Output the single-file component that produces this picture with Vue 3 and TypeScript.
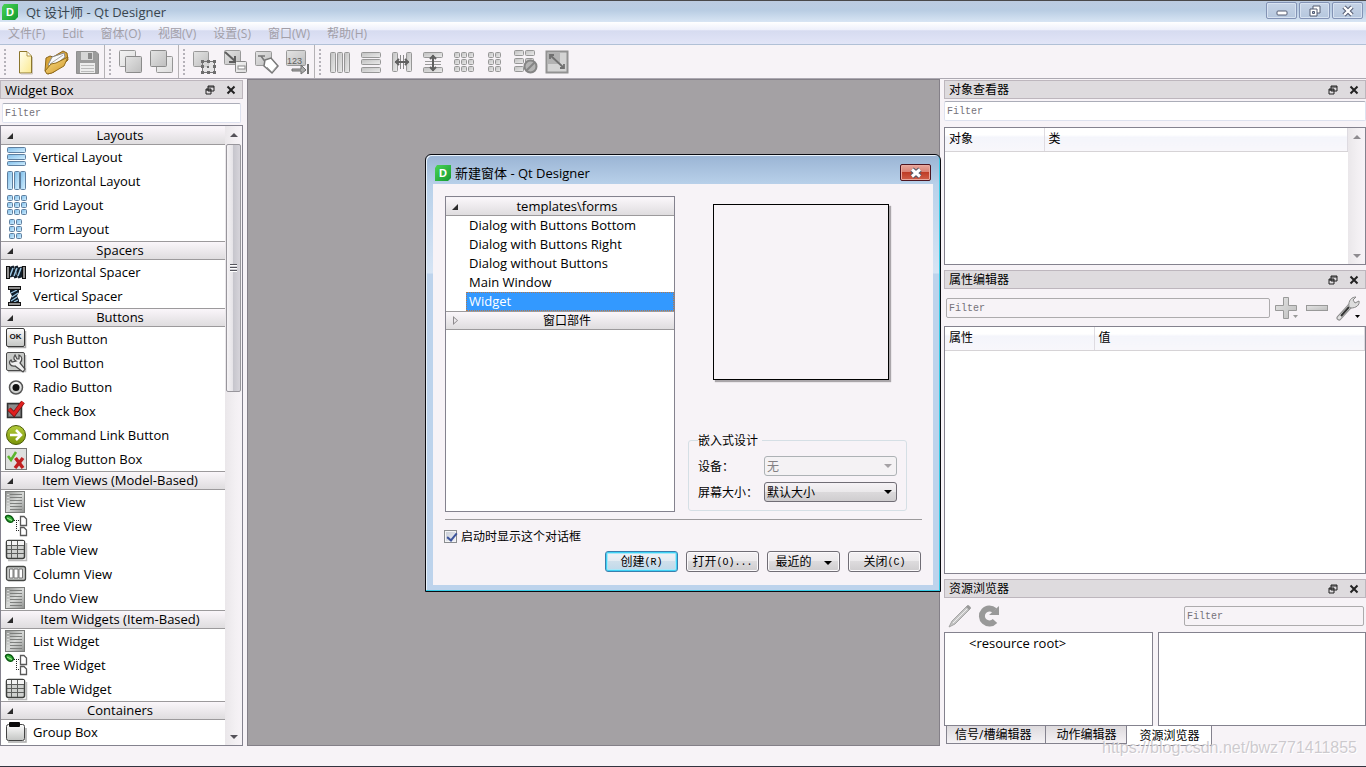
<script setup lang="ts">
import { ref } from 'vue'

interface Section {
  title: string
  items: { label: string; icon: string }[]
}

const bars = (fill: string, stroke: string, rects: number[][]): string =>
  rects
    .map(([x, y, w, h]) => `<rect x="${x + 0.5}" y="${y + 0.5}" width="${w - 1}" height="${h - 1}" rx="1" fill="${fill}" stroke="${stroke}"/>`)
    .join('')

const grid = (x0: number, y0: number, cols: number, pitch: number, size: number): number[][] => {
  const cells: number[][] = []
  for (let r = 0; r < 3; r++) for (let c = 0; c < cols; c++) cells.push([x0 + c * pitch, y0 + r * pitch, size, size])
  return cells
}

const blue = (rects: number[][]): string => bars('url(#gBlue)', '#5f7f9f', rects)
const gray = (rects: number[][]): string => bars('url(#gGray)', '#979797', rects)

const listIcon =
  '<rect x="1.5" y="1.5" width="19" height="21" fill="url(#gList)" stroke="#7b7d7b"/>' +
  '<path d="M6 4.5H18M6 7.5H18M6 10.5H18M6 13.5H18M6 16.5H18M6 19.5H18" stroke="#7d7f7d"/><path d="M3 4.5H5M3 7.5H5M3 10.5H5M3 13.5H5M3 16.5H5M3 19.5H5" stroke="#d8dad8"/>'
const treeIcon =
  '<path d="M1.5 3.5C2 0.500 7 0.500 9.500 5.500C9 9.500 4 9.500 1.500 3.500Z" fill="#34b23a" stroke="#0c5a12" stroke-width="1.500"/><path d="M3 4L8 6.500" stroke="#b5f0a0"/>' +
  '<path d="M10 6.500H15M12.500 8V17M12 16.500H16" stroke="#222" stroke-dasharray="1 1" fill="none"/>' +
  '<path d="M16.500 2.500H20L22.500 5V11.500H16.500ZM16.500 13.500H20L22.500 16V21.500H16.500Z" fill="#fff" stroke="#5a5a5a" stroke-width="1.300"/>'
const tableIcon =
  '<path d="M4 22.500H22.500V5" stroke="#bbb" stroke-width="1.500"/><rect x="2.500" y="2.500" width="18" height="18" rx="2" fill="#cfd1cf" stroke="#3e403e" stroke-width="1.500"/><rect x="3" y="3" width="17" height="4" fill="#f4f4f4"/>' +
  '<path d="M3 7.500H20M3 11.500H20M3 15.500H20M7.500 3V20M13.500 3V20" stroke="#5d5f5d"/>'

const icons: Record<string, string> = {
  vbox: blue([[3, 2, 19, 6], [3, 9, 19, 6], [3, 16, 19, 5]]),
  hbox: blue([[3, 2, 6, 19], [10, 2, 6, 19], [16, 2, 6, 19]]),
  grid: blue(grid(3, 2, 3, 7, 6)),
  form: blue(grid(5, 2, 2, 7, 6)),
  hspacer:
    '<path d="M5 7L8 17M8 6L12 18M12 6L16 18M16 7L19 17" stroke="#101c28" stroke-width="3.500"/><path d="M6 16L9 8M10 16L13 8M14 16L17 8" stroke="#9cc8e4" stroke-width="1.500"/>' +
    '<rect x="2.500" y="6.500" width="3" height="12" fill="#909090" stroke="#111"/><rect x="18.500" y="6.500" width="3" height="12" fill="#909090" stroke="#111"/>',
  vspacer:
    '<path d="M6 5H15V8L13 12L15 16V19H6V16L8 12L6 8Z" fill="#101c28"/><path d="M7 9L13 6M8 13L14 9M7 17L13 13M10 18L14 16" stroke="#9cc8e4" stroke-width="1.200"/>' +
    '<rect x="4.500" y="2.500" width="12" height="3" fill="#909090" stroke="#111"/><rect x="4.500" y="18.500" width="12" height="3" fill="#909090" stroke="#111"/>',
  push:
    '<path d="M4 20.500H21.500V4" stroke="#aaa" stroke-width="1.500" fill="none"/><rect x="2.500" y="1.500" width="18" height="18" rx="1.500" fill="url(#gSteel)" stroke="#3a3a3a"/><text x="11.500" y="12" font-family="Liberation Sans, sans-serif" font-size="8" font-weight="bold" text-anchor="middle" fill="#111">OK</text>',
  tool:
    '<path d="M4 20.500H21.500V4" stroke="#bbb" stroke-width="1.500"/><rect x="2.500" y="1.500" width="18" height="18" rx="1.500" fill="#c9cbc9" stroke="#4a4a4a"/><path d="M11 4C9 7 10 9 12 10L8 11L7 9C4 11 6 16 11 15L19 21L21 18L16 12C19 9 18 5 15 4L15 8L13 8Z" fill="#f0f0f0" stroke="#4a4a4a" stroke-width="1.200"/>',
  radio: '<circle cx="12" cy="12.500" r="6.500" fill="url(#gSteel)" stroke="#555" stroke-width="1.500"/><circle cx="12" cy="12.500" r="3.500" fill="#111"/>',
  check: '<rect x="3.500" y="4.500" width="14" height="14" fill="#777" stroke="#333" stroke-width="1.500"/><rect x="5" y="6" width="11" height="11" fill="#8d8d8d"/><path d="M5 10L10 15L19 3" stroke="#7a1010" stroke-width="4.500" fill="none"/><path d="M5 10L10 15L19 3" stroke="#e02020" stroke-width="3" fill="none"/>',
  command: '<circle cx="12" cy="12" r="9.500" fill="url(#gGreen)" stroke="#4c5c08"/><path d="M6 12H17M12 7L17 12L12 17" stroke="#fff" stroke-width="2.500" fill="none"/>',
  dialog: '<rect x="1.500" y="1.500" width="21" height="21" fill="#dedfde" stroke="#777"/><path d="M4 9L7 13L12 5" stroke="#5bb52c" stroke-width="2.500" fill="none"/><path d="M11.500 11L19 21M19 11L11 21" stroke="#c02020" stroke-width="3.500"/>',
  list: listIcon,
  tree: treeIcon,
  table: tableIcon,
  column: '<rect x="2.500" y="4.500" width="19" height="14" rx="2" fill="#c6c8c6" stroke="#454745" stroke-width="1.300"/><path d="M5.500 7H9V16H5.500ZM10 7H14V16H10ZM15 7H18.500V16H15Z" fill="#fff" stroke="#777"/>',
  group: '<path d="M4 22H22V8" stroke="#aaa" stroke-width="1.500" fill="none"/><rect x="2.500" y="4.500" width="18" height="16" rx="2" fill="url(#gSteel)" stroke="#444"/><rect x="5" y="2" width="11" height="5" rx="1" fill="#0a0a0a"/>',

  new: '<path d="M7.500 2.500H15L19.500 7V24H7.500Z" fill="url(#gPage)" stroke="#8c762c"/><path d="M15 3V7H19" fill="#fff" stroke="#b49a48"/><path d="M20.500 8V25H9" stroke="#ccc5bb" fill="none"/>',
  open:
    '<path d="M2 22L3 9L7 7L10 8L20 2L24 4L25 11L11 23L5 25Z" fill="#d9a63a" stroke="#8b651c"/><path d="M5 16L9 8L21 4L22 8L10 18Z" fill="#fafafa" stroke="#8a8a8a"/><path d="M7 15L20 6" stroke="#aaa"/><path d="M2 22L8 15L13 14L25 8L21 17L9 24L4 25Z" fill="url(#gGold)" stroke="#916b1b"/>',
  save: '<path d="M2.500 2.500H22L24.500 5V24.500H2.500Z" fill="#9c9c9c" stroke="#8f8f8f"/><rect x="7" y="3" width="12" height="8" fill="#d6d6d6"/><rect x="14" y="4" width="4" height="6" fill="#8a8a8a"/><rect x="6" y="14" width="15" height="10" fill="#ececec"/><path d="M7 16.500H20M7 19.500H20M7 22.500H20" stroke="#bbb"/>',
  back: bars('url(#gLite)', '#969696', [[2, 1, 17, 17]]) + bars('url(#gFlat)', '#8b8b8b', [[8, 7, 17, 17]]),
  front: bars('url(#gLite)', '#969696', [[8, 7, 17, 17]]) + bars('url(#gFlat)', '#8b8b8b', [[2, 1, 17, 17]]),
  widgets:
    bars('url(#gFlat)', '#999', [[2, 2, 16, 16]]) + '<rect x="11.500" y="12.500" width="12" height="11" fill="#ddd" fill-opacity=".7" stroke="#777"/><path d="M10 11h3v3h-3zM16 11h3v3h-3zM22 11h3v3h-3zM10 16h3v3h-3zM22 16h3v3h-3zM10 22h3v3h-3zM16 22h3v3h-3zM22 22h3v3h-3zM16 17h2v2h-2z" fill="#6e6e6e"/>',
  signals:
    bars('url(#gFlat)', '#999', [[2, 1, 17, 15]]) + bars('url(#gLite)', '#888', [[13, 12, 12, 12]]) + '<rect x="16" y="17" width="7" height="3" fill="#fff" stroke="#888"/><path d="M3 3L13 12M13 7V13H7" stroke="#5e5e5e" stroke-width="2" fill="none"/>',
  buddies:
    bars('url(#gFlat)', '#999', [[2, 2, 17, 15]]) + '<path d="M5 7H12M8 7L13 14" stroke="#777" stroke-width="1.500"/><path d="M12 11L18 9L25 17L19 24L11 17Z" fill="#fff" stroke="#777" stroke-width="1.500"/><path d="M14 18L19 23L24 17" stroke="#aaa" fill="none"/>',
  order:
    bars('url(#gFlat)', '#999', [[2, 1, 20, 16]]) + '<text x="3" y="15" font-family="Liberation Sans, sans-serif" font-size="9" fill="#5f5f5f">123</text><path d="M8 20H17V16L22 21L17 25V22H8Z" fill="#aaa" stroke="#6f6f6f"/><path d="M24 15V25" stroke="#6f6f6f" stroke-width="2"/>',
  thbox: gray([[3, 3, 6, 21], [10, 3, 6, 21], [17, 3, 6, 21]]),
  tvbox: gray([[3, 3, 20, 6], [3, 10, 20, 6], [3, 18, 20, 6]]),
  hsplit: gray([[3, 3, 6, 20], [17, 3, 6, 20]]) + '<path d="M11.500 6V20M14.500 6V20" stroke="#888"/><path d="M6 13H20M10 10L7 13L10 16M16 10L19 13L16 16" stroke="#606060" stroke-width="2" fill="none"/>',
  vsplit: gray([[3, 3, 20, 6], [3, 18, 20, 6]]) + '<path d="M5 12.500H21M5 15.500H21" stroke="#999"/><path d="M13 6V22M10 10L13 7L16 10M10 18L13 21L16 18" stroke="#606060" stroke-width="2" fill="none"/>',
  tgrid: gray(grid(3, 3, 3, 7, 6)),
  tform: gray(grid(6, 3, 2, 7, 6)),
  break: gray([[1, 1, 10, 6], [12, 1, 10, 6], [1, 9, 10, 6], [12, 9, 9, 6], [1, 17, 10, 6]]) + '<circle cx="17.500" cy="17.500" r="6" fill="#b4b4b4" stroke="#858585" stroke-width="2"/><path d="M13.500 21.500L21.500 13.500" stroke="#858585" stroke-width="2"/>',
  adjust: '<rect x="2.500" y="2.500" width="21" height="21" fill="#d4d4d4" stroke="#929292" stroke-width="2"/><path d="M4 4H16V15H4Z" fill="#b2b2b2"/><path d="M6 6L20 19M6 10V6H10M20 15V19H16" stroke="#707070" stroke-width="1.800" fill="none"/>',
}

const sections: Section[] = [
  { title: 'Layouts', items: [
    { label: 'Vertical Layout', icon: 'vbox' },
    { label: 'Horizontal Layout', icon: 'hbox' },
    { label: 'Grid Layout', icon: 'grid' },
    { label: 'Form Layout', icon: 'form' },
  ] },
  { title: 'Spacers', items: [
    { label: 'Horizontal Spacer', icon: 'hspacer' },
    { label: 'Vertical Spacer', icon: 'vspacer' },
  ] },
  { title: 'Buttons', items: [
    { label: 'Push Button', icon: 'push' },
    { label: 'Tool Button', icon: 'tool' },
    { label: 'Radio Button', icon: 'radio' },
    { label: 'Check Box', icon: 'check' },
    { label: 'Command Link Button', icon: 'command' },
    { label: 'Dialog Button Box', icon: 'dialog' },
  ] },
  { title: 'Item Views (Model-Based)', items: [
    { label: 'List View', icon: 'list' },
    { label: 'Tree View', icon: 'tree' },
    { label: 'Table View', icon: 'table' },
    { label: 'Column View', icon: 'column' },
    { label: 'Undo View', icon: 'list' },
  ] },
  { title: 'Item Widgets (Item-Based)', items: [
    { label: 'List Widget', icon: 'list' },
    { label: 'Tree Widget', icon: 'tree' },
    { label: 'Table Widget', icon: 'table' },
  ] },
  { title: 'Containers', items: [{ label: 'Group Box', icon: 'group' }] },
]

const menus = ['文件(F)', 'Edit', '窗体(O)', '视图(V)', '设置(S)', '窗口(W)', '帮助(H)']
const toolGroups = [
  ['new', 'open', 'save'],
  ['back', 'front'],
  ['widgets', 'signals', 'buddies', 'order'],
  ['thbox', 'tvbox', 'hsplit', 'vsplit', 'tgrid', 'tform', 'break', 'adjust'],
]
const templates = ['Dialog with Buttons Bottom', 'Dialog with Buttons Right', 'Dialog without Buttons', 'Main Window', 'Widget']
const tabs = ['信号/槽编辑器', '动作编辑器', '资源浏览器']

const selected = ref('Widget')
const activeTab = ref('资源浏览器')
const showOnStart = ref(true)
const device = ref('无')
const screenSize = ref('默认大小')
</script>

<template>
  <div class="window">
    <svg class="defs" width="0" height="0" aria-hidden="true">
      <defs>
        <linearGradient id="gBlue" x1="0" y1="0" x2="1" y2="1"><stop offset="0" stop-color="#7dbdea" /><stop offset="1" stop-color="#d8f1ff" /></linearGradient>
        <linearGradient id="gGray" x1="0" y1="0" x2="1" y2="1"><stop offset="0" stop-color="#c0c0c0" /><stop offset="1" stop-color="#ececec" /></linearGradient>
        <linearGradient id="gFlat" x1="0" y1="0" x2="1" y2="1"><stop offset="0" stop-color="#e4e4e4" /><stop offset="1" stop-color="#bebebe" /></linearGradient>
        <linearGradient id="gLite" x1="0" y1="0" x2="1" y2="1"><stop offset="0" stop-color="#f4f4f4" /><stop offset="1" stop-color="#dcdcdc" /></linearGradient>
        <linearGradient id="gSteel" x1="0" y1="0" x2="0" y2="1"><stop offset="0" stop-color="#fdfdfd" /><stop offset="1" stop-color="#c3c5c3" /></linearGradient>
        <linearGradient id="gList" x1="0" y1="0" x2="1" y2="1"><stop offset="0" stop-color="#8e908e" /><stop offset=".5" stop-color="#d8dad8" /><stop offset="1" stop-color="#8e908e" /></linearGradient>
        <linearGradient id="gGreen" x1="0" y1="0" x2="0" y2="1"><stop offset="0" stop-color="#b4cc3c" /><stop offset="1" stop-color="#7a9408" /></linearGradient>
        <linearGradient id="gPage" x1="0" y1="0" x2="1" y2="1"><stop offset="0" stop-color="#fffef0" /><stop offset="1" stop-color="#fbe98e" /></linearGradient>
        <linearGradient id="gGold" x1="0" y1="0" x2="1" y2="1"><stop offset="0" stop-color="#fbdf8a" /><stop offset="1" stop-color="#cf9626" /></linearGradient>
        <linearGradient id="gLogo" x1="0" y1="0" x2="1" y2="1"><stop offset="0" stop-color="#4bd455" /><stop offset="1" stop-color="#139a30" /></linearGradient>
      </defs>
    </svg>

    <header class="titlebar">
      <svg class="logo" viewBox="0 0 16 16"><path d="M2 0H16V13L13 16H0V3Z" fill="url(#gLogo)" /><text x="8" y="12" font-family="Liberation Sans, sans-serif" font-size="11" font-weight="bold" text-anchor="middle" fill="#fff">D</text></svg>
      <h1>Qt 设计师 - Qt Designer</h1>
      <div class="winbtns">
        <button type="button" aria-label="Minimize"><svg viewBox="0 0 16 14"><rect x="3" y="7" width="10" height="4" rx="1" fill="#fff" stroke="#545c72" /></svg></button>
        <button type="button" aria-label="Restore"><svg viewBox="0 0 16 14"><path d="M6 2H13V9H6Z" fill="#fff" stroke="#545c72" /><path d="M3 5H10V12H3Z" fill="#fff" stroke="#545c72" /><path d="M5.500 7.500H7.500V9.500H5.500Z" fill="#a8bad6" stroke="#545c72" /></svg></button>
        <button type="button" aria-label="Close"><svg viewBox="0 0 16 14"><path d="M4 3L12 11M12 3L4 11" stroke="#545c72" stroke-width="4.500" /><path d="M4 3L12 11M12 3L4 11" stroke="#fff" stroke-width="2.400" /></svg></button>
      </div>
    </header>

    <nav class="menubar">
      <button v-for="m in menus" :key="m" type="button">{{ m }}</button>
    </nav>

    <div class="toolbars">
      <div v-for="(group, gi) in toolGroups" :key="gi" class="toolgroup" role="toolbar">
        <span class="grip"></span>
        <button v-for="name in group" :key="name" type="button" :aria-label="name">
          <svg viewBox="0 0 26 26" fill="none" v-html="icons[name]"></svg>
        </button>
      </div>
    </div>

    <div class="workspace">
      <aside class="dock left">
        <div class="docktitle">
          <h2>Widget Box</h2>
          <button type="button" aria-label="Float"><svg viewBox="0 0 10 10"><path d="M3 1H9V6H3ZM3 2H9M1 4H6V9H1ZM1 5H6" fill="none" stroke="#222" /></svg></button>
          <button type="button" aria-label="Close"><svg viewBox="0 0 10 10"><path d="M1.500 1.500L8.500 8.500M8.500 1.500L1.500 8.500" stroke="#222" stroke-width="2" /></svg></button>
        </div>
        <input class="filter wide" type="text" placeholder="Filter" aria-label="Filter widgets" />
        <div class="widgetbox">
          <div class="sections">
            <section v-for="s in sections" :key="s.title">
              <button type="button" class="sechead"><i class="tri"></i>{{ s.title }}</button>
              <ul>
                <li v-for="item in s.items" :key="item.label" class="witem">
                  <svg viewBox="0 0 24 24" fill="none" v-html="icons[item.icon]"></svg>{{ item.label }}
                </li>
              </ul>
            </section>
          </div>
          <div class="scroll">
            <i class="up"></i>
            <div class="thumb"><span></span></div>
            <i class="down"></i>
          </div>
        </div>
      </aside>

      <main class="mdi"></main>

      <aside class="dock right">
        <section class="inspector">
          <div class="docktitle">
            <h2>对象查看器</h2>
            <button type="button" aria-label="Float"><svg viewBox="0 0 10 10"><path d="M3 1H9V6H3ZM3 2H9M1 4H6V9H1ZM1 5H6" fill="none" stroke="#222" /></svg></button>
            <button type="button" aria-label="Close"><svg viewBox="0 0 10 10"><path d="M1.500 1.500L8.500 8.500M8.500 1.500L1.500 8.500" stroke="#222" stroke-width="2" /></svg></button>
          </div>
          <input class="filter wide" type="text" placeholder="Filter" aria-label="Filter objects" />
          <div class="view">
            <table class="objects">
              <thead><tr><th>对象</th><th>类</th></tr></thead>
            </table>
            <div class="scroll"><i class="up"></i><i class="down"></i></div>
          </div>
        </section>

        <section class="properties">
          <div class="docktitle">
            <h2>属性编辑器</h2>
            <button type="button" aria-label="Float"><svg viewBox="0 0 10 10"><path d="M3 1H9V6H3ZM3 2H9M1 4H6V9H1ZM1 5H6" fill="none" stroke="#222" /></svg></button>
            <button type="button" aria-label="Close"><svg viewBox="0 0 10 10"><path d="M1.500 1.500L8.500 8.500M8.500 1.500L1.500 8.500" stroke="#222" stroke-width="2" /></svg></button>
          </div>
          <div class="proptools">
            <input class="filter off" type="text" placeholder="Filter" aria-label="Filter properties" disabled />
            <button type="button" aria-label="Add"><svg viewBox="0 0 26 26"><path d="M9.500 2.500H14.500V10.500H22.500V15.500H14.500V23.500H9.500V15.500H1.500V10.500H9.500Z" fill="url(#gFlat)" stroke="#999" /><path d="M19 20H24L21.500 23Z" fill="#999" /></svg></button>
            <button type="button" aria-label="Remove"><svg viewBox="0 0 26 26"><rect x="1.500" y="10.500" width="21" height="5" fill="url(#gFlat)" stroke="#999" /></svg></button>
            <button type="button" aria-label="Configure"><svg viewBox="0 0 26 26"><path d="M3 23L14 11" stroke="#8a8a8a" stroke-width="5" stroke-linecap="round" /><path d="M3 23L14 11" stroke="#e0e0e0" stroke-width="3" stroke-linecap="round" /><path d="M5 21L13 12" stroke="#333" stroke-width="2" /><path d="M13 12C12 5 16 2 20 2L17 5L19 8L23 6C24 10 20 13 15 13Z" fill="#ddd" stroke="#888" /><path d="M19 20H24L21.500 23Z" fill="#000" /></svg></button>
          </div>
          <div class="view">
            <table class="props">
              <thead><tr><th>属性</th><th>值</th></tr></thead>
            </table>
          </div>
        </section>

        <section class="resources">
          <div class="docktitle">
            <h2>资源浏览器</h2>
            <button type="button" aria-label="Float"><svg viewBox="0 0 10 10"><path d="M3 1H9V6H3ZM3 2H9M1 4H6V9H1ZM1 5H6" fill="none" stroke="#222" /></svg></button>
            <button type="button" aria-label="Close"><svg viewBox="0 0 10 10"><path d="M1.500 1.500L8.500 8.500M8.500 1.500L1.500 8.500" stroke="#222" stroke-width="2" /></svg></button>
          </div>
          <div class="restools">
            <button type="button" aria-label="Edit resources"><svg viewBox="0 0 24 24"><path d="M1 23L4 17L19 2C21 1 23 3 22 5L7 20Z" fill="#c4c4c4" stroke="#a4a4a4" /><path d="M5 19L20 4" stroke="#eee" /><path d="M18 3L21 6L23 4L20 1Z" fill="#999" /></svg></button>
            <button type="button" aria-label="Reload"><svg viewBox="0 0 24 24"><path d="M17.500 6.500A7.500 7.500 0 1 0 18 17" fill="none" stroke="#999" stroke-width="6" /><path d="M12 11H22V2Z" fill="#999" /></svg></button>
            <input class="filter off" type="text" placeholder="Filter" aria-label="Filter resources" disabled />
          </div>
          <div class="panes">
            <div class="pane">&lt;resource root&gt;</div>
            <div class="pane"></div>
          </div>
          <div class="tabs" role="tablist">
            <button v-for="t in tabs" :key="t" type="button" role="tab" :aria-selected="t === activeTab" :class="{ on: t === activeTab }" @click="activeTab = t">{{ t }}</button>
          </div>
        </section>
      </aside>
    </div>

    <footer class="status"></footer>

    <form class="dialog" role="dialog" aria-label="新建窗体" @submit.prevent>
      <div class="dlgtitle">
        <svg class="logo" viewBox="0 0 16 16"><path d="M2 0H16V13L13 16H0V3Z" fill="url(#gLogo)" /><text x="8" y="12" font-family="Liberation Sans, sans-serif" font-size="11" font-weight="bold" text-anchor="middle" fill="#fff">D</text></svg>
        <h2>新建窗体 - Qt Designer</h2>
        <button type="button" class="dlgclose" aria-label="Close"><svg viewBox="0 0 14 12"><path d="M3 2.500L11 9.500M11 2.500L3 9.500" stroke="#4e5666" stroke-width="5" /><path d="M3 2.500L11 9.500M11 2.500L3 9.500" stroke="#fff" stroke-width="3" /></svg></button>
      </div>
      <div class="dlgbody">
        <div class="upper">
          <div class="templates">
            <button type="button" class="sechead"><i class="tri"></i>templates\forms</button>
            <ul>
              <li v-for="t in templates" :key="t"><button type="button" :class="{ sel: t === selected }" @click="selected = t">{{ t }}</button></li>
            </ul>
            <button type="button" class="sechead"><i class="tri closed"></i>窗口部件</button>
          </div>
          <div class="side">
            <div class="preview"></div>
            <fieldset>
              <legend>嵌入式设计</legend>
              <label for="device">设备：</label>
              <div class="combo off"><select id="device" v-model="device" disabled><option>无</option></select></div>
              <label for="screen">屏幕大小：</label>
              <div class="combo"><select id="screen" v-model="screenSize"><option>默认大小</option></select></div>
            </fieldset>
          </div>
        </div>
        <label class="startup"><input v-model="showOnStart" type="checkbox" /><span>启动时显示这个对话框</span></label>
        <div class="actions">
          <button type="submit" class="primary">创建<span>(R)</span></button>
          <button type="button">打开<span>(O)...</span></button>
          <button type="button">最近的<i class="drop"></i></button>
          <button type="button">关闭<span>(C)</span></button>
        </div>
      </div>
    </form>

    <div class="watermark">https://blog.csdn.net/bwz771411855</div>
  </div>
</template>

<style>
body {
  margin: 0;
}
</style>

<style scoped>
* {
  box-sizing: border-box;
}
.window {
  position: relative;
  display: flex;
  flex-direction: column;
  height: 100vh;
  min-height: 640px;
  overflow: hidden;
  background: #f7f3f7;
  color: #000;
  font: 13px/18px "Open Sans", "Noto Sans CJK SC", sans-serif;
}
.defs {
  position: absolute;
}
button {
  margin: 0;
  padding: 0;
  border: 0;
  background: none;
  color: inherit;
  font: inherit;
}
h1,
h2 {
  margin: 0;
  font: inherit;
}
ul {
  margin: 0;
  padding: 0;
  list-style: none;
}
svg {
  display: block;
}
.logo {
  width: 16px;
  height: 16px;
}
.titlebar {
  flex: none;
  display: flex;
  align-items: center;
  gap: 8px;
  height: 22px;
  padding: 0 3px 0 2px;
  border-top: 1px solid #4a494a;
  background: linear-gradient(#bccbe0, #b9cde3 45%, #d8e5f4);
}
.titlebar h1 {
  flex: 1;
  color: #39454f;
}
.winbtns {
  display: flex;
  gap: 2px;
  align-self: flex-start;
  padding-top: 1px;
}
.winbtns button {
  display: flex;
  align-items: center;
  justify-content: center;
  width: 31px;
  height: 17px;
  border: 1px solid #8393b5;
  border-radius: 2px;
  box-shadow: inset 0 0 0 1px #d7e2f1;
  background: linear-gradient(#c6d3e6, #b5c7de);
}
.winbtns svg {
  width: 16px;
  height: 14px;
}
.menubar {
  flex: none;
  display: flex;
  gap: 17px;
  height: 23px;
  padding: 2px 8px 0;
  border-bottom: 1px solid #b1c0d6;
  background: linear-gradient(#fff, #eef0fb 35%, #d6dbf0 40%, #e2e5f7);
  color: #a29fa8;
}
.menubar button {
  font-size: 12px;
}
.toolbars {
  flex: none;
  display: flex;
  height: 34px;
  border-bottom: 1px solid #aca8b1;
}
.toolgroup {
  display: flex;
  align-items: center;
  padding-right: 2px;
  border-right: 1px solid #b5b2b5;
}
.toolgroup:last-child {
  border-right: 0;
}
.grip {
  width: 2px;
  height: 26px;
  margin: 0 3px 0 4px;
  background: repeating-linear-gradient(#b5b2b9 0 2px, #f7f3f7 2px 4px);
}
.toolgroup button {
  width: 31px;
}
.toolgroup svg {
  width: 26px;
  height: 26px;
  margin: 0 auto 0 3px;
}
.workspace {
  flex: 1;
  display: flex;
  gap: 4px;
  min-height: 0;
}
.dock {
  flex: none;
  display: flex;
  flex-direction: column;
  padding-top: 1px;
}
.left {
  width: 243px;
}
.right {
  width: 422px;
}
.docktitle {
  flex: none;
  display: flex;
  align-items: center;
  gap: 11px;
  height: 19px;
  padding: 0 6px 0 4px;
  border: 1px solid #bdb6bd;
  background: #dedbde;
  font-size: 12px;
}
.docktitle h2 {
  flex: 1;
}
.left .docktitle h2 {
  font-size: 13px;
}
.docktitle svg {
  width: 10px;
  height: 10px;
}
.filter {
  min-width: 0;
  height: 20px;
  padding: 0 2px;
  border: 1px solid #dde1ee;
  border-top-color: #abadb8;
  border-radius: 2px;
  background: #fff;
  font: 10px/16px "Liberation Mono", monospace;
}
.filter::placeholder {
  color: #75727a;
  opacity: 1;
}
.filter.wide {
  flex: none;
}
.left .filter {
  margin: 4px 2px 2px;
}
.filter.off {
  border-color: #adabad;
  background: #f7f3f7;
}
.widgetbox {
  flex: 1;
  display: flex;
  min-height: 0;
  border: 1px solid #84828e;
  background: #fff;
}
.sections {
  flex: 1;
  overflow: hidden;
}
.sechead {
  position: relative;
  display: block;
  width: 100%;
  height: 19px;
  padding-left: 14px;
  border-top: 1px solid #9c9a9c;
  border-bottom: 1px solid #9c9a9c;
  background: linear-gradient(#faf6fa, #ebe8eb 55%, #dfdddf);
  line-height: 17px;
  text-align: center;
}
section:first-child > .sechead,
.templates > .sechead:first-child {
  border-top-color: #f7f3f7;
}
.tri {
  position: absolute;
  top: 6px;
  left: 6px;
  border-style: solid;
  border-width: 0 0 6px 6px;
  border-color: transparent transparent #2b2b2b;
}
.tri.closed {
  top: 4px;
  left: 7px;
  width: 5px;
  height: 9px;
  border: 0;
  background: #8d8a8d;
  clip-path: polygon(0 0, 100% 50%, 0 100%, 0 0, 1px 2px, 1px 7px, 4px 50%, 1px 2px);
}
.witem {
  display: flex;
  align-items: center;
  gap: 5px;
  height: 24px;
  padding-left: 3px;
}
.witem svg {
  flex: none;
  width: 24px;
  height: 24px;
}
.scroll {
  flex: none;
  display: flex;
  flex-direction: column;
  align-items: center;
  width: 17px;
  background: linear-gradient(90deg, #eae7ea, #f3f0f3 60%, #f7f3f7);
}
.scroll .up,
.scroll .down {
  border: 4px solid transparent;
  border-top-width: 0;
  border-bottom: 4px solid #555259;
  margin: 7px 0;
}
.scroll .down {
  margin: auto 0 6px;
  border-top: 4px solid #555259;
  border-bottom-width: 0;
}
.view .scroll .up {
  border-bottom-color: #8e8b90;
}
.view .scroll .down {
  border-top-color: #8e8b90;
}
.thumb {
  display: flex;
  align-items: center;
  justify-content: center;
  width: 15px;
  height: 248px;
  border: 1px solid #98969c;
  border-radius: 2px;
  background: linear-gradient(90deg, #f5f3f5, #e5e3e7 45%, #c7c6cd 50%, #d6d4da);
}
.thumb span {
  width: 7px;
  height: 8px;
  background: repeating-linear-gradient(#55555d 0 1px, #fff 1px 2px, #d0cfd6 2px 3px);
}
.mdi {
  flex: 1;
  min-width: 0;
  border: 1px solid #848088;
  background: #a4a1a4;
}
.inspector {
  flex: none;
}
.inspector .filter {
  display: block;
  width: 100%;
  margin: 2px 0 6px;
}
.view {
  display: flex;
  border: 1px solid #84828e;
  background: #fff;
}
.inspector .view {
  height: 138px;
}
.properties {
  flex: 1;
  display: flex;
  flex-direction: column;
  min-height: 0;
  padding: 5px 0;
}
.properties .view {
  flex: 1;
}
table {
  flex: 1;
  align-self: flex-start;
  border-collapse: collapse;
  table-layout: fixed;
  font-size: 12px;
}
th {
  height: 23px;
  padding: 0 4px;
  border-right: 1px solid #dedbe1;
  border-bottom: 1px solid #d6d3d6;
  background: linear-gradient(#fff 30%, #f4f5fb 40%, #f8f7fb);
  font-weight: 400;
  text-align: left;
}
.objects th:first-child {
  width: 99px;
}
.props th:first-child {
  width: 149px;
}
.proptools {
  display: flex;
  align-items: center;
  gap: 5px;
  height: 37px;
  padding: 1px 4px 0 2px;
}
.proptools .filter {
  flex: 1;
  margin-right: -1px;
}
.proptools svg {
  width: 26px;
  height: 26px;
}
.resources {
  flex: none;
}
.restools {
  display: flex;
  align-items: center;
  gap: 5px;
  height: 34px;
  padding: 2px 2px 0 4px;
}
.restools svg {
  width: 24px;
  height: 24px;
}
.restools .filter {
  width: 180px;
  margin-left: auto;
}
.panes {
  display: grid;
  grid-template-columns: 209px 1fr;
  gap: 5px;
}
.pane {
  height: 94px;
  padding: 1px 24px;
  border: 1px solid #84828e;
  background: #fff;
}
.tabs {
  display: flex;
  align-items: flex-start;
  height: 20px;
  padding-left: 2px;
}
.tabs button {
  height: 18px;
  padding: 0 14px 0 8px;
  border: 1px solid #84828e;
  border-top: 0;
  background: linear-gradient(#dddadd, #f5f2f5);
  font-size: 12px;
  line-height: 17px;
}
.tabs button + button {
  border-left: 0;
  padding: 0 10px;
}
.tabs button.on {
  height: 20px;
  padding: 0 12px;
  background: #fff;
  line-height: 19px;
}
.status {
  flex: none;
  height: 21px;
  border-bottom: 1px solid #33333f;
}
.dialog {
  position: absolute;
  top: 154px;
  left: 50%;
  width: 516px;
  margin-left: -258px;
  padding: 0 7px 6px;
  border: 1px solid #0b0b10;
  border-radius: 6px 6px 0 0;
  background: linear-gradient(#9ab4d4, #b9d1ea 30px, #d6e4f4 118px, #bdd3ec 119px);
  box-shadow: inset -1px -1px 0 #37cbe6, inset 1px 1px 0 #eaf3fb;
}
.dlgtitle {
  display: flex;
  align-items: center;
  gap: 4px;
  height: 29px;
  padding: 6px 2px 0;
}
.dlgtitle h2 {
  flex: 1;
}
.dlgclose {
  display: flex;
  align-items: center;
  justify-content: center;
  width: 31px;
  height: 17px;
  border: 1px solid #4e1520;
  border-radius: 2px;
  box-shadow: inset 0 0 0 1px #eaa99e;
  background: linear-gradient(#e8a79c, #d98072 48%, #bf3d27 50%, #d0604a);
}
.dlgclose svg {
  width: 14px;
  height: 12px;
}
.dlgbody {
  height: 401px;
  padding: 12px 11px 12px 12px;
  background: #f7f3f7;
  font: 12px/18px "Liberation Mono", "Noto Sans CJK SC", sans-serif;
}
.upper {
  display: flex;
  justify-content: space-between;
  height: 324px;
  border-bottom: 1px solid #9c9a9c;
}
.templates {
  width: 230px;
  height: 316px;
  border: 1px solid #84828e;
  background: #fff;
  font: 13px/18px "Open Sans", "Noto Sans CJK SC", sans-serif;
}
.templates .sechead:last-child {
  font-size: 12px;
}
.templates li {
  padding-left: 20px;
}
.templates li button {
  display: block;
  width: 100%;
  height: 19px;
  padding-left: 2px;
  border: 1px solid transparent;
  line-height: 17px;
  text-align: left;
}
.templates li .sel {
  border: 1px dotted #b5794a;
  background: #3399ff;
  color: #fff;
}
.side {
  display: flex;
  flex-direction: column;
  justify-content: space-between;
  align-items: center;
  width: 219px;
  margin-right: 15px;
  padding: 8px 0;
}
.preview {
  width: 176px;
  height: 176px;
  margin-left: 7px;
  border: 1px solid #000;
  box-shadow: 2px 2px 1px #aaa6aa;
}
fieldset {
  display: grid;
  grid-template-columns: 66px 133px;
  row-gap: 6px;
  width: 219px;
  margin: 0;
  padding: 5px 9px 8px;
  border: 1px solid #d5dfe5;
  border-radius: 3px;
}
legend {
  padding: 4px 4px 0 0;
  line-height: 18px;
}
fieldset label {
  height: 20px;
  padding-top: 2px;
  line-height: 20px;
  white-space: nowrap;
}
.combo {
  position: relative;
  height: 20px;
}
.combo::after,
.drop {
  content: "";
  border: 4px solid transparent;
  border-top-color: #000;
  border-bottom: 0;
}
.combo::after {
  position: absolute;
  top: 8px;
  right: 5px;
  pointer-events: none;
}
.combo.off::after {
  border-top-color: #a5a2a5;
}
select {
  appearance: none;
  width: 100%;
  height: 20px;
  padding: 2px 2px 0;
  border: 1px solid #706d75;
  border-radius: 3px;
  background: linear-gradient(#f5f2f5, #eae8ea 50%, #dbd9db 52%, #cfcdcf);
  color: #000;
  font: inherit;
}
select:disabled {
  border-color: #adb2b5;
  background: #f4f2f4;
  color: #838083;
  opacity: 1;
}
.startup {
  display: flex;
  align-items: center;
  gap: 4px;
  width: max-content;
  height: 18px;
  margin: 7px 0 6px -1px;
}
.startup span {
  padding-top: 3px;
}
.startup input {
  appearance: none;
  width: 13px;
  height: 13px;
  margin: 0;
  border: 1px solid #8b8d90;
  box-shadow: inset 0 0 0 1px #f4f4f6;
  background: linear-gradient(135deg, #c6cbd5, #f2f2f6);
}
.startup input:checked::after {
  content: "";
  display: block;
  width: 4px;
  height: 8px;
  margin: 0 0 0 4px;
  border: solid #3d549c;
  border-width: 0 2px 2px 0;
  transform: rotate(40deg);
}
.actions {
  display: flex;
  justify-content: flex-end;
  gap: 8px;
  padding-right: 1px;
}
.actions button {
  display: flex;
  align-items: center;
  justify-content: center;
  width: 73px;
  height: 21px;
  padding-top: 2px;
  border: 1px solid #706d75;
  border-radius: 3px;
  box-shadow: inset 0 0 0 1px #fbf9fb;
  background: linear-gradient(#f4f1f4, #ebe9eb 48%, #dddbdd 50%, #cfcdcf);
}
.actions .primary {
  border-color: #3a7fae;
  box-shadow: inset 0 0 0 1px #3fd2f5, inset 0 0 0 2px #a8e7f8;
  background: linear-gradient(#f1f2f6, #e3ebf2 48%, #cfdfeb 50%, #bfd9ea);
}
.actions span {
  font-size: 10px;
}
.drop {
  margin-left: 12px;
}
.watermark {
  position: absolute;
  right: 9px;
  bottom: 7px;
  color: rgba(190, 187, 192, 0.75);
  font: 16px/24px "Liberation Sans", sans-serif;
  text-shadow: 1px 1px 0 #fff;
}
</style>
